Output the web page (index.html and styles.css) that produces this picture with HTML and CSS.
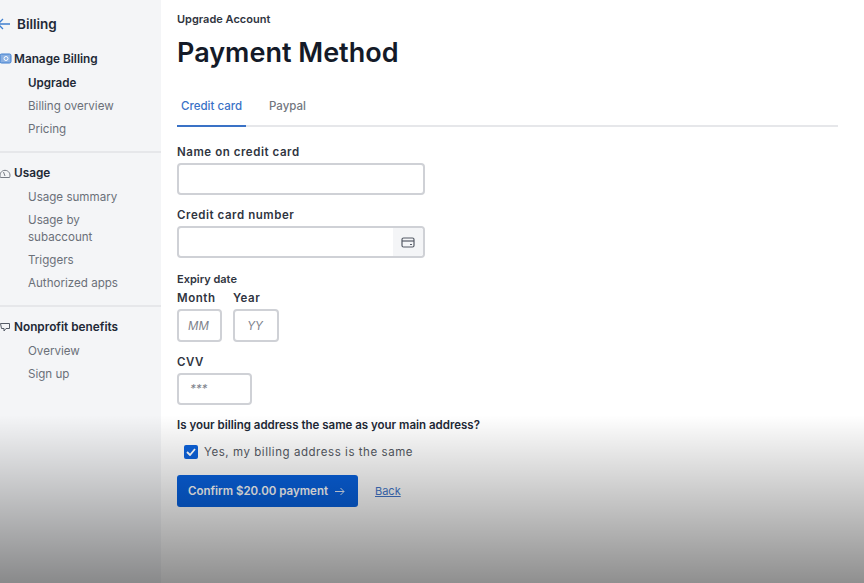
FILE: index.html
```html
<!DOCTYPE html>
<html lang="en">
<head>
    <meta charset="UTF-8">
    <title>Payment Method</title>
    <link rel="stylesheet" href="styles.css">
</head>
<body>
    <div class="page">
        <aside class="sidebar">
            <div class="back-row">
                <svg class="back-arrow" width="14" height="12" viewBox="0 0 14 12" fill="none" stroke="#3f7fd0" stroke-width="1.3"><path d="M13 6H1M6 1L1 6l5 5"/></svg>
                <span>Billing</span>
            </div>

            <div class="nav-group">
                <div class="nav-head">
                    <svg class="nav-icon" width="13" height="12" viewBox="0 0 13 12"><rect x="1" y="1" width="11" height="9" rx="1.5" fill="#8ab0e2" stroke="#3f7fd0"/><circle cx="7" cy="5.500" r="2" fill="none" stroke="#fff"/></svg>
                    <span>Manage Billing</span>
                </div>
                <a class="nav-link active">Upgrade</a>
                <a class="nav-link">Billing overview</a>
                <a class="nav-link">Pricing</a>
            </div>

            <div class="nav-group">
                <div class="nav-head">
                    <svg class="nav-icon" width="13" height="12" viewBox="0 0 13 12" fill="none" stroke="#777c85"><path d="M1.500 10.500a5 5 0 1 1 9 0z"/><path d="M6 9L4.500 5"/></svg>
                    <span>Usage</span>
                </div>
                <a class="nav-link">Usage summary</a>
                <a class="nav-link">Usage by subaccount</a>
                <a class="nav-link">Triggers</a>
                <a class="nav-link">Authorized apps</a>
            </div>

            <div class="nav-group">
                <div class="nav-head">
                    <svg class="nav-icon" width="13" height="12" viewBox="0 0 13 12" fill="none" stroke="#555b66"><path d="M1.500 2.500h9v5H7L5 10V7.500H2.500z"/></svg>
                    <span>Nonprofit benefits</span>
                </div>
                <a class="nav-link">Overview</a>
                <a class="nav-link">Sign up</a>
            </div>
        </aside>

        <main class="content">
            <div class="eyebrow">Upgrade Account</div>
            <h1>Payment Method</h1>

            <div class="tabs">
                <a class="tab active">Credit card</a>
                <a class="tab">Paypal</a>
            </div>

            <label class="field-label first">Name on credit card</label>
            <div class="input input-wide"></div>

            <label class="field-label">Credit card number</label>
            <div class="input input-wide input-card">
                <span class="card-addon">
                    <svg width="14" height="11" viewBox="0 0 14 11" fill="none" stroke="#555b66" stroke-width="1.200"><rect x="1" y="1" width="12" height="9" rx="1.500"/><path d="M1 4h12"/><path d="M9 7.500h2"/></svg>
                </span>
            </div>

            <div class="expiry-title">Expiry date</div>
            <div class="expiry-row">
                <div class="expiry-col">
                    <label class="sub-label">Month</label>
                    <div class="input input-short"><span class="placeholder">MM</span></div>
                </div>
                <div class="expiry-col">
                    <label class="sub-label">Year</label>
                    <div class="input input-short"><span class="placeholder">YY</span></div>
                </div>
            </div>

            <label class="field-label">CVV</label>
            <div class="input input-cvv"><span class="placeholder">***</span></div>

            <div class="question">Is your billing address the same as your main address?</div>
            <div class="check-row">
                <span class="checkbox">
                    <svg width="10" height="8" viewBox="0 0 10 8" fill="none" stroke="#fff" stroke-width="1.800"><path d="M1 4l3 3 5-6"/></svg>
                </span>
                <span>Yes, my billing address is the same</span>
            </div>

            <div class="actions">
                <button class="confirm">Confirm $20.00 payment
                    <svg width="10" height="9" viewBox="0 0 10 9" fill="none" stroke="#dfe8f8" stroke-width="1"><path d="M0 4.500h9M5.500 1L9 4.500 5.500 8"/></svg>
                </button>
                <a class="back-link">Back</a>
            </div>
        </main>
    </div>
    <div class="fade"></div>
</body>
</html>
```

FILE: styles.css
```css
body {
    margin: 0;
    height: 583px;
    overflow: hidden;
    background-color: #fff;
    font-family: Inter, "Noto Sans", sans-serif;
    color: #2a2f3a;
}
.page {
    display: flex;
    height: 583px;
}
.sidebar {
    width: 161px;
    flex-shrink: 0;
    background-color: #f4f5f7;
    box-sizing: border-box;
    padding-top: 15px;
}
.back-row {
    display: flex;
    align-items: center;
    gap: 6px;
    margin-left: -3px;
    height: 18px;
    font-size: 13.500px;
    font-weight: 600;
    color: #222936;
}
.nav-group {
    padding: 12px 0 10px 14px;
    border-bottom: 2px solid #e6e7ea;
}
.back-row + .nav-group {
    padding-top: 18px;
}
.nav-group:last-child {
    border-bottom: 0;
}
.nav-head {
    position: relative;
    height: 16px;
    line-height: 17px;
    font-size: 11.800px;
    font-weight: 600;
    color: #222936;
    margin-bottom: 5px;
}
.nav-icon {
    position: absolute;
    left: -15px;
    top: 2px;
}
.nav-link {
    display: block;
    margin-left: 14px;
    width: 100px;
    padding: 3px 0;
    line-height: 17px;
    font-size: 11.600px;
    color: #6b7079;
}
.nav-link.active {
    color: #222936;
    font-weight: 600;
}
.content {
    flex: 1;
    padding: 12px 26px 0 16px;
}
.eyebrow {
    font-size: 11px;
    font-weight: 600;
    line-height: 14px;
    color: #30353f;
}
h1 {
    margin: 8px 0 0;
    font-size: 27px;
    font-weight: 600;
    line-height: 38px;
    color: #141a28;
}
.tabs {
    display: flex;
    margin-top: 15px;
    border-bottom: 2px solid #e6e7ea;
    height: 38px;
}
.tab {
    padding: 11px 4px 0;
    height: 27px;
    margin-right: 15px;
    font-size: 11.500px;
    font-weight: 500;
    line-height: 16px;
    color: #73777f;
}
.tab.active {
    margin-right: 19px;
    color: #3a72c6;
    border-bottom: 2px solid #3a72c6;
}
.field-label {
    display: block;
    margin-top: 10px;
    height: 21px;
    font-size: 11.500px;
    font-weight: 600;
    letter-spacing: 0.550px;
    line-height: 20px;
    color: #30353f;
}
.field-label.first {
    margin-top: 15px;
}
.input {
    box-sizing: border-box;
    height: 32px;
    background-color: #fff;
    border: 2px solid #cfd1d6;
    border-radius: 4px;
}
.input-wide {
    width: 248px;
}
.input-card {
    display: flex;
    justify-content: flex-end;
}
.card-addon {
    display: flex;
    align-items: center;
    justify-content: center;
    width: 30px;
    background-color: #f4f5f7;
    border-radius: 0 3px 3px 0;
}
.expiry-title {
    margin-top: 13px;
    font-size: 11px;
    font-weight: 600;
    line-height: 16px;
    color: #30353f;
}
.expiry-row {
    display: flex;
    gap: 11px;
}
.expiry-col {
    display: flex;
    flex-direction: column;
}
.sub-label {
    margin-top: 2px;
    height: 20px;
    font-size: 11.500px;
    font-weight: 600;
    letter-spacing: 0.550px;
    line-height: 18px;
    color: #30353f;
}
.input-short {
    width: 45px;
    height: 33px;
    display: flex;
    align-items: center;
    justify-content: center;
    padding-right: 2px;
}
.expiry-col:last-child .input-short {
    width: 46px;
}
.input-cvv {
    width: 75px;
    display: flex;
    align-items: center;
    padding-left: 11px;
}
.placeholder {
    font-size: 11.500px;
    font-style: italic;
    color: #7d828b;
}
.question {
    margin-top: 12px;
    font-size: 11.500px;
    font-weight: 600;
    line-height: 16px;
    color: #222936;
}
.check-row {
    display: flex;
    align-items: center;
    gap: 6px;
    margin: 11px 0 0 7px;
    height: 16px;
    font-size: 11.500px;
    letter-spacing: 0.550px;
    color: #555a63;
}
.checkbox {
    display: flex;
    align-items: center;
    justify-content: center;
    width: 14px;
    height: 14px;
    background-color: #0c62dc;
    border-radius: 2px;
}
.actions {
    display: flex;
    align-items: center;
    gap: 17px;
    margin-top: 15px;
}
.confirm {
    display: flex;
    align-items: center;
    justify-content: center;
    gap: 7px;
    width: 181px;
    height: 32px;
    padding: 0 2px 0 0;
    border: 0;
    border-radius: 3px;
    background-color: #0862e0;
    font-family: inherit;
    font-size: 11.500px;
    font-weight: 600;
    color: #fff;
}
.back-link {
    font-size: 11px;
    color: #4478cc;
    text-decoration: underline;
}
/* darkening over the bottom of the page */
.fade {
    position: absolute;
    left: 0;
    right: 0;
    top: 415px;
    height: 168px;
    background: linear-gradient(rgba(0, 0, 0, 0), rgba(0, 0, 0, 0.44));
    pointer-events: none;
}
```
